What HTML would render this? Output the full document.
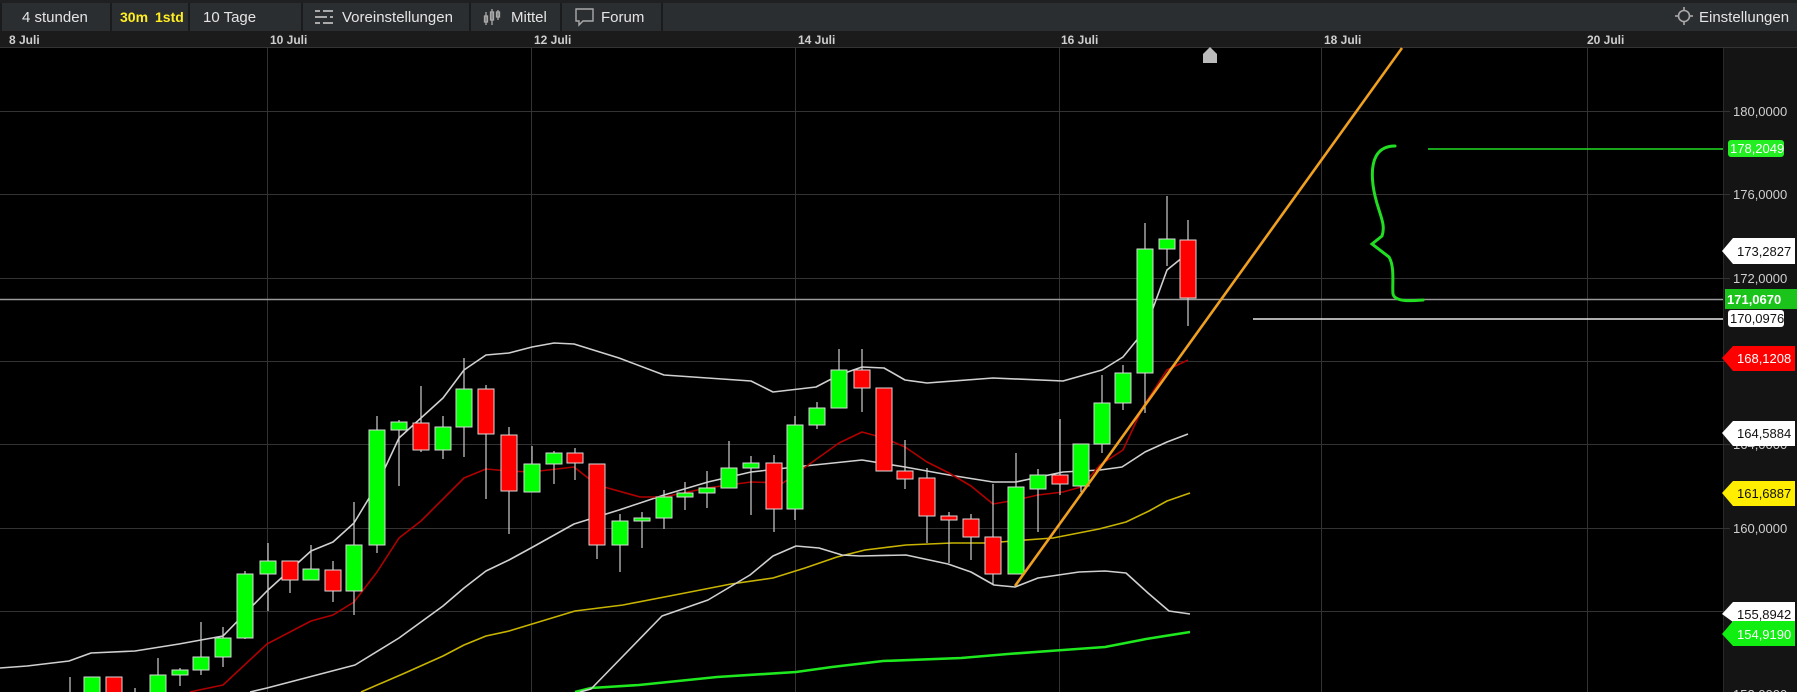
<!DOCTYPE html>
<html><head><meta charset="utf-8"><style>
html,body{margin:0;padding:0;background:#000;width:1797px;height:692px;overflow:hidden}
svg{display:block}
text{font-family:"Liberation Sans",Arial,sans-serif}
</style></head><body>
<svg width="1797" height="692" viewBox="0 0 1797 692" xmlns="http://www.w3.org/2000/svg">
<rect x="0" y="0" width="1797" height="692" fill="#000"/>
<rect x="0" y="0" width="1797" height="4" fill="#1e2022"/>
<rect x="0" y="3" width="1797" height="28" fill="#2b2e31"/>
<rect x="0" y="31" width="1797" height="17" fill="#1b1b1b"/>
<line x1="0" y1="47.5" x2="1797" y2="47.5" stroke="#333"/>
<rect x="1723" y="48" width="74" height="644" fill="#141414"/>
<line x1="1723.5" y1="48" x2="1723.5" y2="692" stroke="#2a2a2a"/>

<g stroke="#1a1b1d" stroke-width="2">
<line x1="1" y1="3" x2="1" y2="31"/>
<line x1="111" y1="3" x2="111" y2="31"/>
<line x1="189" y1="3" x2="189" y2="31"/>
<line x1="302" y1="3" x2="302" y2="31"/>
<line x1="470" y1="3" x2="470" y2="31"/>
<line x1="561" y1="3" x2="561" y2="31"/>
<line x1="662" y1="3" x2="662" y2="31"/>
</g>
<g font-size="15" fill="#e4e4e4">
<text x="22" y="22">4 stunden</text>
<text x="120" y="22" fill="#ffee22" font-weight="bold" font-size="14">30m</text>
<text x="155" y="22" fill="#ffee22" font-weight="bold" font-size="14">1std</text>
<text x="203" y="22">10 Tage</text>
<text x="342" y="22">Voreinstellungen</text>
<text x="511" y="22">Mittel</text>
<text x="601" y="22">Forum</text>
<text x="1699" y="22">Einstellungen</text>
</g>
<g stroke="#aaa" stroke-width="2">
<line x1="315" y1="11" x2="333" y2="11"/><line x1="315" y1="17" x2="333" y2="17"/><line x1="315" y1="23" x2="333" y2="23"/>
</g>
<g fill="#2b2e31"><rect x="320" y="9" width="3" height="4"/><rect x="327" y="15" width="3" height="4"/><rect x="320" y="21" width="3" height="4"/></g>
<g stroke="#aaa" stroke-width="1.3" fill="none">
<line x1="486" y1="12" x2="486" y2="25"/><rect x="484.5" y="16" width="3" height="6"/>
<line x1="492" y1="9" x2="492" y2="25"/><rect x="490.5" y="12" width="3" height="8"/>
<line x1="498" y1="10" x2="498" y2="20"/><rect x="496.5" y="12" width="3" height="5"/>
</g>
<path d="M576 9 H593 V21 H583 L579 25 V21 H576 Z" fill="none" stroke="#aaa" stroke-width="1.4"/>
<g stroke="#aaa" stroke-width="1.6" fill="none">
<circle cx="1684" cy="16" r="5.5"/>
<line x1="1684" y1="7" x2="1684" y2="10"/><line x1="1684" y1="22" x2="1684" y2="25"/>
<line x1="1675" y1="16" x2="1678" y2="16"/><line x1="1690" y1="16" x2="1693" y2="16"/>
</g>

<g font-size="12" fill="#cfcfcf" font-weight="bold">
<text x="9" y="44">8 Juli</text>
<text x="270" y="44">10 Juli</text>
<text x="534" y="44">12 Juli</text>
<text x="798" y="44">14 Juli</text>
<text x="1061" y="44">16 Juli</text>
<text x="1324" y="44">18 Juli</text>
<text x="1587" y="44">20 Juli</text>
</g>

<g stroke="#333" stroke-width="1">
<line x1="267.5" y1="48" x2="267.5" y2="692"/>
<line x1="531.5" y1="48" x2="531.5" y2="692"/>
<line x1="795.5" y1="48" x2="795.5" y2="692"/>
<line x1="1059.5" y1="48" x2="1059.5" y2="692"/>
<line x1="1321.5" y1="48" x2="1321.5" y2="692"/>
<line x1="1587.5" y1="48" x2="1587.5" y2="692"/>
<line x1="0" y1="111.5" x2="1730" y2="111.5"/>
<line x1="0" y1="194.5" x2="1730" y2="194.5"/>
<line x1="0" y1="278.5" x2="1730" y2="278.5"/>
<line x1="0" y1="361.5" x2="1730" y2="361.5"/>
<line x1="0" y1="444.5" x2="1730" y2="444.5"/>
<line x1="0" y1="528.5" x2="1730" y2="528.5"/>
<line x1="0" y1="611.5" x2="1730" y2="611.5"/>
</g>
<path d="M1203 63 V54 L1210 47 L1217 54 V63 Z" fill="#bbb"/>

<line x1="0" y1="299.5" x2="1723" y2="299.5" stroke="#9a9a9a" stroke-width="1.5"/>
<line x1="1253" y1="319" x2="1723" y2="319" stroke="#e8e8e8" stroke-width="1.5"/>
<line x1="1428" y1="149" x2="1723" y2="149" stroke="#22dd22" stroke-width="1.5"/>

<g fill="none" stroke-linejoin="round">
<polyline stroke="#1ee81e" stroke-width="2.6" points="575,692 591,688 639,685 717,677 796,672 832,667 883,661 961,658 1008,654 1063,650 1105,647 1146,639 1190,632"/>
<polyline stroke="#c8b400" stroke-width="1.6" points="361,692 405,673 443,656 464,645 486,636 509,631 575,611 623,605 685,593 731,584 773,578 805,568 837,557 865,550 906,545 952,543 989,543 1012,541 1053,538 1099,529 1126,522 1149,511 1167,501 1190,493"/>
<polyline stroke="#d0d0d0" stroke-width="1.6" points="580,692 591,689 662,616 708,600 750,575 773,556 796,546 819,548 842,555 860,556 906,555 948,564 971,572 994,585 1015,587 1038,578 1079,572 1105,571 1126,573 1148,593 1169,611 1190,614"/>
<polyline stroke="#d0d0d0" stroke-width="1.6" points="250,692 267,688 355,665 399,638 443,606 464,588 486,571 509,560 531,548 574,524 619,510 664,495 708,482 751,472 795,467 862,460 905,467 949,475 993,482 1016,482 1063,472 1100,470 1122,467 1145,452 1167,442 1188,434"/>
<polyline stroke="#d0d0d0" stroke-width="1.6" points="0,668 27,666 69,661 91,653 135,651 179,644 223,636 267,591 311,551 333,542 354,523 377,485 399,438 443,398 464,370 486,355 509,353 532,347 554,343 574,344 619,358 664,375 751,381 773,392 816,387 839,375 862,367 884,368 905,380 927,383 993,378 1063,381 1102,370 1123,357 1145,330 1167,270 1188,253"/>
<polyline stroke="#b00000" stroke-width="1.6" points="190,692 199,690 223,685 267,644 311,621 333,615 354,602 377,572 399,538 421,521 464,478 486,469 509,471 531,472 574,467 597,485 640,497 664,497 707,488 751,482 783,483 839,443 862,432 884,438 905,447 927,462 949,473 971,486 993,504 1016,500 1038,495 1063,492 1081,487 1100,465 1123,450 1143,407 1167,370 1188,360"/>
</g>

<g stroke="#cfcfcf" stroke-width="1.2">
<line x1="70" y1="677" x2="70" y2="692"/>
<line x1="135" y1="688" x2="135" y2="692"/>
<line x1="158" y1="658" x2="158" y2="692"/>
<line x1="180" y1="668" x2="180" y2="686"/>
<line x1="201" y1="622" x2="201" y2="675"/>
<line x1="223" y1="627" x2="223" y2="667"/>
<line x1="245" y1="571" x2="245" y2="639"/>
<line x1="268" y1="543" x2="268" y2="611"/>
<line x1="290" y1="561" x2="290" y2="593"/>
<line x1="311" y1="545" x2="311" y2="580"/>
<line x1="333" y1="561" x2="333" y2="602"/>
<line x1="354" y1="502" x2="354" y2="615"/>
<line x1="377" y1="416" x2="377" y2="553"/>
<line x1="399" y1="420" x2="399" y2="486"/>
<line x1="421" y1="386" x2="421" y2="452"/>
<line x1="443" y1="416" x2="443" y2="459"/>
<line x1="464" y1="358" x2="464" y2="457"/>
<line x1="486" y1="385" x2="486" y2="499"/>
<line x1="509" y1="427" x2="509" y2="534"/>
<line x1="532" y1="446" x2="532" y2="492"/>
<line x1="554" y1="451" x2="554" y2="484"/>
<line x1="575" y1="448" x2="575" y2="480"/>
<line x1="597" y1="464" x2="597" y2="559"/>
<line x1="620" y1="514" x2="620" y2="572"/>
<line x1="642" y1="512" x2="642" y2="548"/>
<line x1="664" y1="490" x2="664" y2="529"/>
<line x1="685" y1="482" x2="685" y2="510"/>
<line x1="707" y1="471" x2="707" y2="508"/>
<line x1="729" y1="441" x2="729" y2="488"/>
<line x1="751" y1="456" x2="751" y2="515"/>
<line x1="774" y1="455" x2="774" y2="532"/>
<line x1="795" y1="416" x2="795" y2="520"/>
<line x1="817" y1="402" x2="817" y2="429"/>
<line x1="839" y1="349" x2="839" y2="408"/>
<line x1="862" y1="349" x2="862" y2="412"/>
<line x1="905" y1="440" x2="905" y2="489"/>
<line x1="927" y1="468" x2="927" y2="543"/>
<line x1="949" y1="512" x2="949" y2="563"/>
<line x1="971" y1="514" x2="971" y2="560"/>
<line x1="993" y1="484" x2="993" y2="584"/>
<line x1="1016" y1="453" x2="1016" y2="574"/>
<line x1="1038" y1="469" x2="1038" y2="532"/>
<line x1="1060" y1="419" x2="1060" y2="495"/>
<line x1="1081" y1="444" x2="1081" y2="492"/>
<line x1="1102" y1="375" x2="1102" y2="453"/>
<line x1="1123" y1="365" x2="1123" y2="410"/>
<line x1="1145" y1="223" x2="1145" y2="413"/>
<line x1="1167" y1="196" x2="1167" y2="266"/>
<line x1="1188" y1="220" x2="1188" y2="326"/>
</g>
<g stroke="#d8d8d8" stroke-width="1">
<g fill="#00ff00">
<rect x="84" y="677" width="16" height="20"/>
<rect x="150" y="675" width="16" height="22"/>
<rect x="172" y="670" width="16" height="5"/>
<rect x="193" y="657" width="16" height="13"/>
<rect x="215" y="638" width="16" height="19"/>
<rect x="237" y="574" width="16" height="64"/>
<rect x="260" y="561" width="16" height="13"/>
<rect x="303" y="569" width="16" height="11"/>
<rect x="346" y="545" width="16" height="46"/>
<rect x="369" y="430" width="16" height="115"/>
<rect x="391" y="422" width="16" height="8"/>
<rect x="435" y="427" width="16" height="23"/>
<rect x="456" y="389" width="16" height="38"/>
<rect x="524" y="464" width="16" height="28"/>
<rect x="546" y="453" width="16" height="11"/>
<rect x="612" y="521" width="16" height="24"/>
<rect x="634" y="518" width="16" height="3"/>
<rect x="656" y="497" width="16" height="21"/>
<rect x="677" y="493" width="16" height="4"/>
<rect x="699" y="488" width="16" height="5"/>
<rect x="721" y="468" width="16" height="20"/>
<rect x="743" y="463" width="16" height="5"/>
<rect x="787" y="425" width="16" height="84"/>
<rect x="809" y="408" width="16" height="17"/>
<rect x="831" y="370" width="16" height="38"/>
<rect x="1008" y="487" width="16" height="87"/>
<rect x="1030" y="475" width="16" height="14"/>
<rect x="1073" y="444" width="16" height="42"/>
<rect x="1094" y="403" width="16" height="41"/>
<rect x="1115" y="373" width="16" height="30"/>
<rect x="1137" y="249" width="16" height="124"/>
<rect x="1159" y="239" width="16" height="10"/>
</g>
<g fill="#ff0000">
<rect x="106" y="677" width="16" height="20"/>
<rect x="282" y="561" width="16" height="19"/>
<rect x="325" y="570" width="16" height="21"/>
<rect x="413" y="423" width="16" height="27"/>
<rect x="478" y="389" width="16" height="45"/>
<rect x="501" y="435" width="16" height="56"/>
<rect x="567" y="453" width="16" height="10"/>
<rect x="589" y="464" width="16" height="81"/>
<rect x="766" y="463" width="16" height="46"/>
<rect x="854" y="370" width="16" height="18"/>
<rect x="876" y="388" width="16" height="83"/>
<rect x="897" y="471" width="16" height="8"/>
<rect x="919" y="478" width="16" height="38"/>
<rect x="941" y="516" width="16" height="4"/>
<rect x="963" y="519" width="16" height="18"/>
<rect x="985" y="537" width="16" height="37"/>
<rect x="1052" y="475" width="16" height="9"/>
<rect x="1180" y="240" width="16" height="58"/>
</g>
</g>

<line x1="1015" y1="586" x2="1402" y2="48" stroke="#f0a020" stroke-width="2.6"/>
<path d="M1395,146 C1377,146 1370,160 1373,185 C1376,210 1387,222 1382,236 L1372,244 L1389,257 C1395,267 1392,285 1393,294 C1395,302 1410,301 1423,300" fill="none" stroke="#22dd22" stroke-width="3" stroke-linecap="round"/>

<g font-size="13" fill="#cfcfcf">
<text x="1733" y="116">180,0000</text>
<text x="1733" y="199">176,0000</text>
<text x="1733" y="283">172,0000</text>
<text x="1733" y="449">164,0000</text>
<text x="1733" y="533">160,0000</text>
<text x="1733" y="699">152,0000</text>
</g>

<g font-size="13">
<rect x="1728" y="140" width="56" height="17" rx="3" fill="#22ee22"/>
<text x="1730" y="153" fill="#fff">178,2049</text>
<path d="M1722,251 L1733,238 H1795 V264 H1733 Z" fill="#fff"/>
<text x="1737" y="256" fill="#111">173,2827</text>
<rect x="1725" y="289" width="72" height="20" fill="#1bc41b"/>
<text x="1727" y="304" fill="#fff" font-weight="bold">171,0670</text>
<rect x="1728" y="310" width="56" height="17" rx="3" fill="#fff"/>
<text x="1730" y="323" fill="#111">170,0976</text>
<path d="M1722,358 L1733,346 H1795 V371 H1733 Z" fill="#ff0000"/>
<text x="1737" y="363" fill="#fff">168,1208</text>
<path d="M1722,433 L1733,421 H1795 V446 H1733 Z" fill="#fff"/>
<text x="1737" y="438" fill="#111">164,5884</text>
<path d="M1722,493 L1733,481 H1795 V506 H1733 Z" fill="#ffee00"/>
<text x="1737" y="498" fill="#111">161,6887</text>
<path d="M1722,614 L1733,602 H1795 V622 H1733 Z" fill="#fff"/>
<text x="1737" y="619" fill="#111">155,8942</text>
<path d="M1722,634 L1733,621 H1795 V646 H1733 Z" fill="#11ee11"/>
<text x="1737" y="639" fill="#fff">154,9190</text>
</g>
</svg>
</body></html>
